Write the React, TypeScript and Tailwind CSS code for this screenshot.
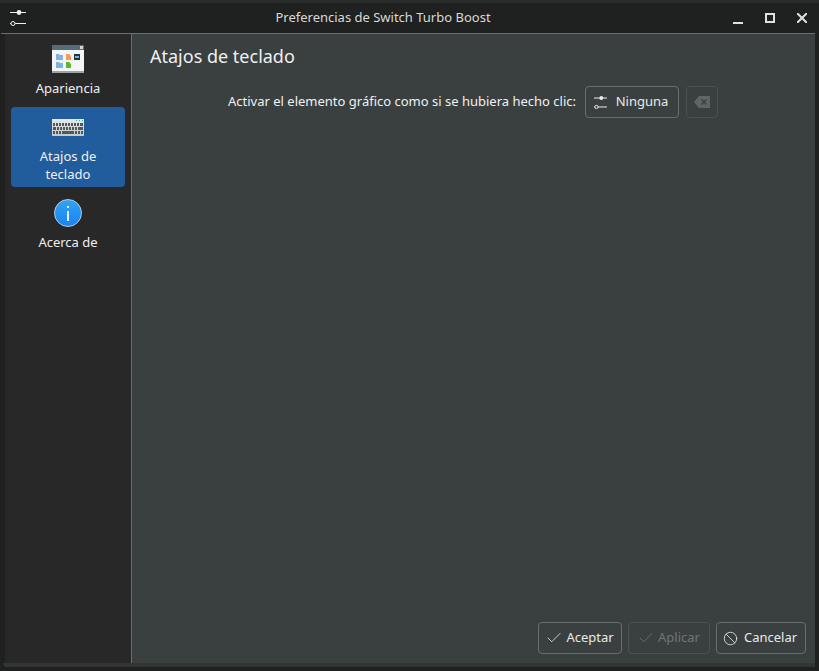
import { Check, Ban } from "lucide-react";

function SlidersIcon({ className, holeColor }: { className?: string; holeColor: string }) {
  return (
    <svg viewBox="0 0 16 16" className={className} fill="none" stroke="currentColor">
      <path d="M0 2.5h16M0 13.5h16" strokeWidth="1" vectorEffect="non-scaling-stroke" />
      <circle cx="9" cy="2.5" r="2.4" fill="currentColor" stroke="none" />
      <circle cx="3" cy="13.5" r="2" fill={holeColor} strokeWidth="1" vectorEffect="non-scaling-stroke" />
    </svg>
  );
}

function AppearanceIcon() {
  return (
    <svg viewBox="0 0 32 28" className="h-[28px] w-[32px]">
      <rect width="32" height="28" fill="#f4f5f5" />
      <rect width="32" height="5" fill="#566b7c" />
      <rect y="26" width="32" height="2" fill="#9aa3a8" />
      <rect x="28" y="1" width="3" height="3" fill="#c9d6de" />
      <path d="M4 9h3l1 1h3v5H4z" fill="#7fb2e5" />
      <path d="M4 17h3l1 1h3v5H4z" fill="#7fb2e5" />
      <path d="M14 9h3l2 2v4h-5z" fill="#f59a5b" />
      <path d="M14 17h3l2 2v4h-5z" fill="#5cb82e" />
      <rect x="22" y="9" width="6" height="6" fill="#2a3138" />
      <rect x="23" y="11" width="4" height="2" fill="#5cbcf0" />
    </svg>
  );
}

// x and width of each key, one list per row
const keyRows = [
  [[1, 2], [4, 2], [7, 2], [10, 2], [13, 2], [16, 2], [19, 2], [22, 2], [25, 2], [28, 3]],
  [[1, 3], [5, 2], [8, 2], [11, 2], [14, 2], [17, 2], [20, 2], [23, 2], [26, 5]],
  [[1, 2], [4, 2], [7, 2], [10, 12], [23, 2], [26, 2], [29, 2]],
];

function KeyboardIcon() {
  return (
    <svg viewBox="0 0 32 17" className="mt-px h-[17px] w-[32px]">
      <defs>
        <linearGradient id="kb" x1="0" y1="0" x2="0" y2="1">
          <stop offset="0" stopColor="#e6e9e9" />
          <stop offset="1" stopColor="#c4c9c9" />
        </linearGradient>
      </defs>
      <rect width="32" height="17" fill="url(#kb)" />
      <rect x="24" y="1" width="1" height="1" fill="#35b56a" />
      <rect x="27" y="1" width="1" height="1" fill="#35b56a" />
      <rect x="30" y="1" width="1" height="1" fill="#35b56a" />
      {keyRows.map((row, r) =>
        row.map(([x, w]) => <rect key={`${r}-${x}`} x={x} y={4 + r * 4} width={w} height="3" fill="#505a58" />),
      )}
    </svg>
  );
}

function InfoIcon() {
  return (
    <div className="flex h-[28px] w-[28px] items-center justify-center rounded-full border border-[#b4cfe6] bg-gradient-to-b from-[#2fa4f2] to-[#1c82f0]">
      <svg viewBox="0 0 2 15" className="h-[15px] w-[2px]" fill="#e3f1fc">
        <rect y="0" width="2" height="2" />
        <rect y="5" width="2" height="10" />
      </svg>
    </div>
  );
}

function BackspaceIcon() {
  return (
    <svg viewBox="0 0 16 12" className="h-[12px] w-[16px]">
      <path d="M5 0h11v12H5L0 6z" fill="#5f6566" />
      <path d="M7.5 3.5l5 5M12.5 3.5l-5 5" stroke="#3a4040" strokeWidth="1.4" />
    </svg>
  );
}

function Button({ children, disabled, className }: { children: React.ReactNode; disabled?: boolean; className?: string }) {
  return (
    <div
      className={`flex h-[32px] items-center justify-center rounded-[4px] border ${
        disabled ? "border-[#4c5253] text-[#6f7576]" : "border-[#686d6e] text-[#e8eaea]"
      } ${className ?? ""}`}
    >
      {children}
    </div>
  );
}

export default function App() {
  return (
    <div className="h-[671px] w-[819px] overflow-hidden bg-[#1f2020] font-['Noto_Sans',sans-serif] text-[13px] text-[#eff0f1]">
      <div className="h-[3px] bg-[#2a2b2b]" />
      <div className="ml-px mr-[4px] flex h-[664px] flex-col overflow-hidden rounded-t-[5px] bg-[#1f2020]">
        <div className="relative flex h-[30px] shrink-0 items-center justify-center pr-[50px]">
          <SlidersIcon holeColor="#1f2020" className="absolute left-[9px] top-[7px] h-[16px] w-[16px] text-[#eff0f1]" />
          <span className="text-[#d8dada]">Preferencias de Switch Turbo Boost</span>
          <div className="absolute right-[8px] top-0 flex h-full items-center gap-[22px]">
            <div className="mt-[10px] h-[2px] w-[10px] bg-[#e0e0e0]" />
            <div className="h-[10px] w-[10px] border-2 border-[#e0e0e0]" />
            <svg viewBox="0 0 10 10" className="h-[10px] w-[10px]" stroke="#e0e0e0" strokeWidth="2">
              <path d="M0 0l10 10M10 0L0 10" />
            </svg>
          </div>
        </div>
        <div className="flex min-h-0 flex-1 flex-col pl-[4px]">
          <div className="-ml-[4px] h-px shrink-0 bg-[#6a6f70]" />
          <div className="flex min-h-0 flex-1">
            <div className="flex w-[126px] shrink-0 flex-col items-center bg-[#282828] px-[6px] pt-[11px]">
              <div className="flex h-[62px] w-full flex-col items-center">
                <AppearanceIcon />
                <span className="mt-[6px] leading-[18px]">Apariencia</span>
              </div>
              <div className="flex h-[80px] w-full flex-col items-center rounded-[4px] bg-[#215d9c] pt-[11px] text-center leading-[18px]">
                <KeyboardIcon />
                <span className="mt-[11px]">Atajos de<br />teclado</span>
              </div>
              <div className="mt-[12px] flex w-full flex-col items-center">
                <InfoIcon />
                <span className="mt-[6px] leading-[18px]">Acerca de</span>
              </div>
            </div>
            <div className="flex min-w-0 flex-1 flex-col border-l border-[#6a6f70] bg-[#3a4040]">
              <h1 className="ml-[18px] mt-[8px] text-[18px] leading-[28px]">Atajos de teclado</h1>
              <div className="mr-[97px] mt-[16px] flex items-center justify-end">
                <span>Activar el elemento gráfico como si se hubiera hecho clic:</span>
                <Button className="ml-[9px] w-[94px] gap-[9px] pr-[2px]">
                  <SlidersIcon holeColor="#3a4040" className="h-[13px] w-[13px]" />
                  Ninguna
                </Button>
                <Button disabled className="ml-[7px] w-[32px]">
                  <BackspaceIcon />
                </Button>
              </div>
              <div className="mb-[9px] mr-[9px] mt-auto flex justify-end gap-[6px]">
                <Button className="w-[84px] gap-[3px] pr-[1px]">
                  <Check size={18} strokeWidth={1.1} />
                  Aceptar
                </Button>
                <Button disabled className="w-[82px] gap-[3px] pr-[1px]">
                  <Check size={18} strokeWidth={1.1} />
                  Aplicar
                </Button>
                <Button className="w-[90px] gap-[6px] pr-[2px]">
                  <Ban size={15} strokeWidth={1.3} />
                  Cancelar
                </Button>
              </div>
            </div>
          </div>
          <div className="-ml-[2px] h-[4px] shrink-0 rounded-bl-[4px] bg-[#333434]" />
        </div>
      </div>
    </div>
  );
}
